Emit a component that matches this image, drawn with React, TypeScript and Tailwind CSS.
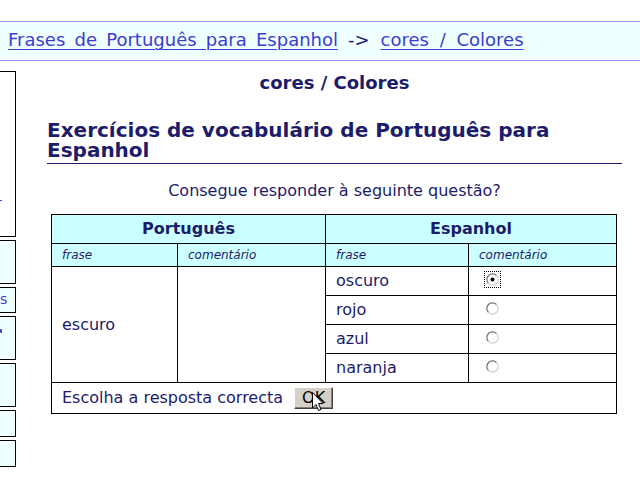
import React from "react";

const navy = "text-[#1c1c6b]";

function Radio({ checked }: { checked?: boolean }) {
  return (
    <span
      className={`inline-flex h-[15px] w-[15px] items-center justify-center ${
        checked ? "outline outline-1 outline-dotted outline-black" : ""
      }`}
    >
      <svg width="13" height="13" viewBox="0 0 13 13">
        <path d="M10.5 2.5 A5.5 5.5 0 0 0 2.5 10.5" fill="none" stroke="#707070" strokeWidth="1.2" />
        <path d="M2.5 10.5 A5.5 5.5 0 0 0 10.5 2.5" fill="none" stroke="#d0d0d0" strokeWidth="1.2" />
        <circle cx="6.5" cy="6.5" r="4.2" fill="#fff" />
        {checked && <circle cx="6.5" cy="6.5" r="2" fill="#000" />}
      </svg>
    </span>
  );
}

const sideBoxes = [
  { h: "h-[166px]", bg: "bg-white", mark: "dash" },
  { h: "h-[44px]", bg: "bg-[#f0ffff]", mark: "" },
  { h: "h-[26px]", bg: "bg-[#f0ffff]", mark: "s" },
  { h: "h-[44px]", bg: "bg-[#f0ffff]", mark: "dot" },
  { h: "h-[44px]", bg: "bg-[#f0ffff]", mark: "" },
  { h: "h-[27px]", bg: "bg-[#f0ffff]", mark: "" },
  { h: "h-[27px]", bg: "bg-[#f0ffff]", mark: "" },
];

export default function App() {
  const options = ["oscuro", "rojo", "azul", "naranja"];

  return (
    <div
      className={`relative h-[480px] w-[640px] overflow-hidden bg-white ${navy}`}
      style={{ fontFamily: '"DejaVu Sans", Verdana, sans-serif' }}
    >
      <div className="h-[21px]" />
      <nav className="flex h-[40px] items-center border-y border-[#9999ff] bg-[#f0ffff] pb-[3px] pl-[8px] text-[18px] [word-spacing:3.5px]">
        <a className="text-[#3c3ccf] underline decoration-1 underline-offset-[3px]">
          Frases de Português para Espanhol
        </a>
        <span className="ml-[10px] mr-[11px]">-&gt;</span>
        <a className="text-[#3c3ccf] underline decoration-1 underline-offset-[3px] [word-spacing:5px]">
          cores / Colores
        </a>
      </nav>

      <div className="flex">
        <aside className="ml-[-5px] mt-[10px] flex w-[21px] flex-col gap-[3px]">
          {sideBoxes.map((b, i) => (
            <div
              key={i}
              className={`relative border border-black ${b.h} ${b.bg} overflow-hidden`}
            >
              {b.mark === "dash" && (
                <span className="absolute left-[4px] top-[128px] h-[1px] w-[2px] bg-[#3c3ccf]" />
              )}
              {b.mark === "s" && (
                <span className="absolute left-[4px] top-[2px] text-[14px] leading-[18px] text-[#3c3ccf]">
                  s
                </span>
              )}
              {b.mark === "dot" && (
                <span className="absolute left-[4px] top-[12px] h-[4px] w-[2px] rounded-full bg-[#3c3ccf]" />
              )}
            </div>
          ))}
        </aside>

        <main className="ml-[31px] w-[575px]">
          <h1 className="mt-[12px] text-center text-[18px] font-bold leading-[20px]">
            cores / Colores
          </h1>
          <h2 className="mt-[27px] border-b border-[#1c1c6b] pb-[3px] text-[20px] font-bold leading-[20px]">
            Exercícios de vocabulário de Português para Espanhol
          </h2>
          <p className="mt-[17px] text-center text-[16px] leading-[20px]">
            Consegue responder à seguinte questão?
          </p>

          <table className="ml-[4px] mt-[13px] w-[565px] table-fixed border-collapse border border-black text-[16px]">
            <colgroup>
              <col className="w-[126px]" />
              <col className="w-[148px]" />
              <col className="w-[143px]" />
              <col className="w-[148px]" />
            </colgroup>
            <thead>
              <tr className="h-[29px] bg-[#ccffff]">
                <th colSpan={2} className="border border-black text-center font-bold">
                  Português
                </th>
                <th colSpan={2} className="border border-black text-center font-bold">
                  Espanhol
                </th>
              </tr>
              <tr className="h-[23px] bg-[#ccffff] text-[12px] italic">
                <td className="border border-black pl-[10px]">frase</td>
                <td className="border border-black pl-[10px]">comentário</td>
                <td className="border border-black pl-[10px]">frase</td>
                <td className="border border-black pl-[10px]">comentário</td>
              </tr>
            </thead>
            <tbody>
              {options.map((o, i) => (
                <tr key={o} className="h-[29px]">
                  {i === 0 && (
                    <>
                      <td rowSpan={4} className="border border-black pl-[10px]">
                        escuro
                      </td>
                      <td rowSpan={4} className="border border-black" />
                    </>
                  )}
                  <td className="border border-black pl-[10px]">{o}</td>
                  <td className="border border-black pl-[16px]">
                    <Radio checked={i === 0} />
                  </td>
                </tr>
              ))}
              <tr className="h-[31px]">
                <td colSpan={4} className="border border-black pl-[10px]">
                  <span className="inline-flex items-center gap-[11px]">
                    Escolha a resposta correcta
                    <span className="relative">
                      <button className="h-[22px] w-[39px] border border-t-white border-l-white border-r-[#404040] border-b-[#404040] bg-[#d4d0c8] text-[16px] leading-[18px] text-black shadow-[inset_-1px_-1px_0_#808080]">
                        OK
                      </button>
                      <svg
                        className="absolute left-[18px] top-[6px]"
                        width="12"
                        height="20"
                        viewBox="0 0 12 20"
                      >
                        <path
                          d="M0.5 0.5 L0.5 16 L4 12.5 L6.5 18.5 L9 17.5 L6.5 11.5 L11 11.5 Z"
                          fill="#fff"
                          stroke="#000"
                          strokeWidth="1"
                        />
                      </svg>
                    </span>
                  </span>
                </td>
              </tr>
            </tbody>
          </table>
        </main>
      </div>
    </div>
  );
}
